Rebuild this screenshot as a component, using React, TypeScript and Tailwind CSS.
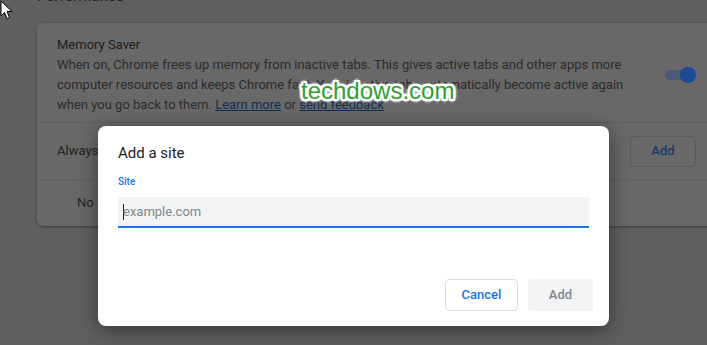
export default function App() {
  return (
    <div className="relative w-[707px] h-[345px] overflow-hidden bg-[#5f5f5f] font-['Roboto',sans-serif]">
      {/* dimmed settings page */}
      <div className="pl-[37px]">
        <div className="h-[23px] -mt-[14px] text-[15px] leading-[20px] text-[#1f1f1f]">Performance</div>
        <div className="w-[690px] mt-[14px] rounded-[6px] bg-[#686868] shadow-[0_1px_3px_rgba(0,0,0,0.35)]">
          <div className="flex pl-[20px] pt-[12px] pb-[7px] border-b border-[#5e5e5e]">
            <div className="w-[600px] text-[13px] leading-[20px]">
              <div className="text-[#1e1e1e]">Memory Saver</div>
              <div className="text-[#2c2c2c]">
                When on, Chrome frees up memory from inactive tabs. This gives active tabs and other apps more
                <br />
                computer resources and keeps Chrome fast. Your inactive tabs automatically become active again
                <br />
                when you go back to them. <span className="underline text-[#0e2d57]">Learn more</span> or{' '}
                <span className="underline text-[#0e2d57]">send feedback</span>
              </div>
            </div>
            <div className="relative ml-[8px] mt-[32px] w-[32px] h-[16px]">
              <div className="absolute left-0 top-[3px] w-[29px] h-[10px] rounded-full bg-[#4b5a78]" />
              <div className="absolute left-[15px] top-0 w-[16px] h-[16px] rounded-full bg-[#1b4a98]" />
            </div>
          </div>
          <div className="flex items-center h-[57px] pl-[20px] border-b border-[#5e5e5e]">
            <div className="w-[573px] text-[13px] text-[#222]">Always keep these sites active</div>
            <div className="w-[66px] h-[31px] rounded-[4px] border border-[#5a5a5a] flex items-center justify-center text-[13px] font-medium text-[#1c3a68]">
              Add
            </div>
          </div>
          <div className="h-[46px] pl-[40px] flex items-center text-[13px] text-[#262626]">No sites added</div>
        </div>
      </div>

      {/* cursor */}
      <svg className="absolute left-0 top-0" width="13" height="20" viewBox="0 0 13 20">
        <path d="M1 1 L1 16 L4.5 12.5 L7 18.5 L9.5 17.5 L7 11.5 L12 11.5 Z" fill="#fff" stroke="#000" strokeWidth="1" />
      </svg>

      {/* watermark */}
      <div className="absolute left-[301px] top-[76px] text-[24px] leading-[30px] font-['Liberation_Sans',sans-serif] text-[#2e9f30] [text-shadow:2px_0_0_#fff,-2px_0_0_#fff,0_2px_0_#fff,0_-2px_0_#fff,2px_2px_0_#fff,-2px_-2px_0_#fff,2px_-2px_0_#fff,-2px_2px_0_#fff,3px_0_2px_#fff,-3px_0_2px_#fff,0_3px_2px_#fff,0_-3px_2px_#fff]">
        techdows.com
      </div>

      {/* dialog */}
      <div className="absolute left-[98px] top-[126px] w-[511px] h-[200px] rounded-[8px] bg-white shadow-[0_4px_20px_rgba(0,0,0,0.45)] flex flex-col">
        <div className="pl-[20px] pt-[17px] text-[15px] leading-[20px] text-[#202124]">Add a site</div>
        <div className="pl-[20px] pt-[13px] text-[10px] leading-[12px] font-medium text-[#1a73e8]">Site</div>
        <div className="mx-[20px] mt-[9px] h-[31px] bg-[#f1f3f4] border-b-2 border-[#1a73e8] flex items-center pl-[5px] text-[13px] text-[#80868b]">
          <span className="w-px h-[16px] bg-[#202124] mr-[-1px]" />
          example.com
        </div>
        <div className="flex-1" />
        <div className="flex justify-end gap-[10px] pr-[16px] pb-[15px]">
          <div className="w-[73px] h-[32px] rounded-[4px] border border-[#dadce0] flex items-center justify-center text-[13px] font-medium text-[#1a73e8]">
            Cancel
          </div>
          <div className="w-[65px] h-[32px] rounded-[4px] bg-[#f1f3f4] flex items-center justify-center text-[13px] font-medium text-[#80868b]">
            Add
          </div>
        </div>
      </div>
    </div>
  );
}
